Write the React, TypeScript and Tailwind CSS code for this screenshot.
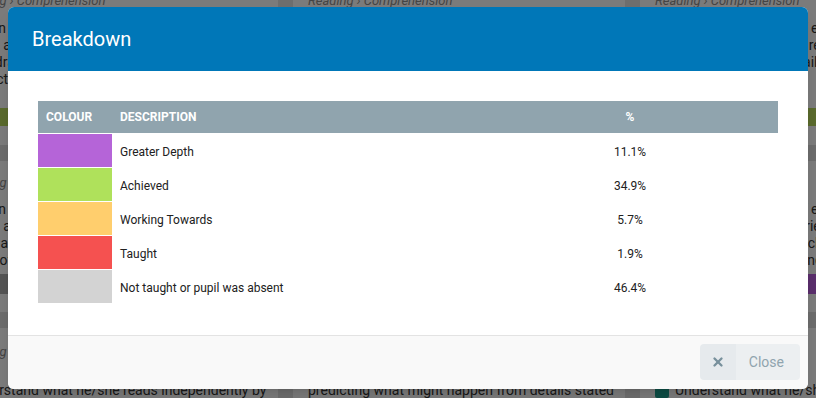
import { X } from 'lucide-react';

interface Band {
  id: string;
  name: string;
  colour: string;
  percent: string;
}

const bands: Band[] = [
  { id: 'gd', name: 'Greater Depth', colour: 'bg-[#b564d8]', percent: '11.1%' },
  { id: 'ach', name: 'Achieved', colour: 'bg-[#afe15b]', percent: '34.9%' },
  { id: 'wt', name: 'Working Towards', colour: 'bg-[#ffce6d]', percent: '5.7%' },
  { id: 'tau', name: 'Taught', colour: 'bg-[#f55150]', percent: '1.9%' },
  { id: 'abs', name: 'Not taught or pupil was absent', colour: 'bg-[#d3d3d3]', percent: '46.4%' },
];

// cards behind the dimmed backdrop, only the edges show
function BackgroundCard({ lower, lines, lines2, last, check }: { lower: string; lines: string[]; lines2: string[]; last: string; check?: boolean }) {
  return (
    <div className="flex w-[332px] shrink-0 flex-col bg-[#f7f7f7] text-[14px] text-[#333]">
      <div className="h-[22px] px-[15px] pt-[3px] text-[13px] italic text-[#888]">Reading › Comprehension</div>
      <div className="flex h-[98px] flex-col overflow-hidden px-[15px] pt-[10px] leading-[17px]">
        {lines.map((l) => (
          <div key={l} className="whitespace-nowrap">{l}</div>
        ))}
      </div>
      <div className="h-[18px] bg-[#b4d45a]" />
      <div className="h-[19px]" />
      <div className="h-[16px] bg-[#d8d8d8]" />
      <div className="h-[24px] px-[15px] pt-[12px] text-[13px] italic text-[#888]">Reading › Comprehension</div>
      <div className="flex h-[89px] flex-col overflow-hidden px-[15px] pt-[16px] leading-[17px]">
        {lines2.map((l) => (
          <div key={l} className="whitespace-nowrap">{l}</div>
        ))}
      </div>
      <div className={`h-[20px] ${lower}`} />
      <div className="h-[18px]" />
      <div className="h-[16px] bg-[#d8d8d8]" />
      <div className="h-[40px] px-[15px] pt-[14px] text-[13px] italic text-[#888]">Reading › Comprehension</div>
      <div className="flex items-center gap-[6px] whitespace-nowrap px-[15px] pt-[12px]">
        {check && <span className="h-[14px] w-[14px] rounded-[2px] bg-[#1a9a8a]" />}
        {last}
      </div>
    </div>
  );
}

export default function App() {
  return (
    <div className="relative h-[398px] w-[816px] overflow-hidden bg-[#dcdcdc] font-['Roboto',sans-serif]">
      <div className="-ml-[54px] -mt-[12px] flex gap-[15px]">
        <BackgroundCard
          lower="bg-[#a9a9a9]"
          check
          lines={['Explain and discuss his/her understanding of the main', 'points and suggest explanations for what he/she has just', 'read, drawing on the ideas discussed in class and to also', 'interact with others while reading the text independently']}
          lines2={['Explain and discuss his/her understanding of the main', 'points and suggest explanations for what has happened', 'so far and to make predictions of outcomes in a', 'range of familiar stories and poems about the characters']}
          last="Understand what he/she reads independently by"
        />
        <BackgroundCard
          lower="bg-[#a9a9a9]"
          lines={['Make inferences on the basis of what is being said', 'and done in the story, discussing how the author', 'uses language and where the reader learns more', 'about the characters']}
          lines2={['Make inferences on the basis of what is being said', 'and done in the story, discussing how the author', 'uses language and where the reader learns more', 'about the characters']}
          last="predicting what might happen from details stated"
        />
        <BackgroundCard
          lower="bg-[#b45cd8]"
          check
          lines={['Discuss the sequence of events in books and how', 'items of information are related to each other and shown', 'in the text, using the details he/she has learned', 'about the characters']}
          lines2={['Discuss the sequence of events in books and how', 'the characters in the stories behave, with the themes', 'and ideas explained in a clear way, making links', 'to personal experience and wider reading']}
          last="Understand what he/she reads independently"
        />
      </div>

      <div className="absolute inset-0 bg-black/50">
        <div className="ml-[8px] mt-[7px] w-[800px] overflow-hidden rounded-[6px] bg-white shadow-lg">
          <div className="flex h-[64px] items-center bg-[#0077b8] px-[24px]">
            <h1 className="text-[20px] font-normal text-white">Breakdown</h1>
          </div>

          <div className="px-[30px] pb-[32px] pt-[30px]">
            <div className="grid h-[32px] grid-cols-[74px_1fr_296px] items-center bg-[#90a4ae] text-[12px] font-bold uppercase text-white">
              <div className="pl-[8px]">Colour</div>
              <div className="pl-[8px]">Description</div>
              <div className="text-center">%</div>
            </div>
            {bands.map((band) => (
              <div key={band.id} className="grid h-[34px] grid-cols-[74px_1fr_296px] items-center border-t border-white text-[12px] text-[#212121]">
                <div className={`h-full ${band.colour}`} />
                <div className="pl-[8px] pt-[2px]">{band.name}</div>
                <div className="pt-[2px] text-center">{band.percent}</div>
              </div>
            ))}
          </div>

          <div className="flex h-[54px] justify-end border-t border-[#e3e3e3] bg-[#f9f9f9] pr-[8px] pt-[8px]">
            <button className="flex h-[36px] overflow-hidden rounded-[4px] text-[14px] text-[#90a4ae]">
              <span className="flex w-[36px] items-center justify-center bg-[#e6eaed] text-[#78909c]">
                <X size={14} strokeWidth={4} />
              </span>
              <span className="flex items-center bg-[#eceff1] pl-[13px] pr-[16px]">Close</span>
            </button>
          </div>
        </div>
      </div>
    </div>
  );
}
